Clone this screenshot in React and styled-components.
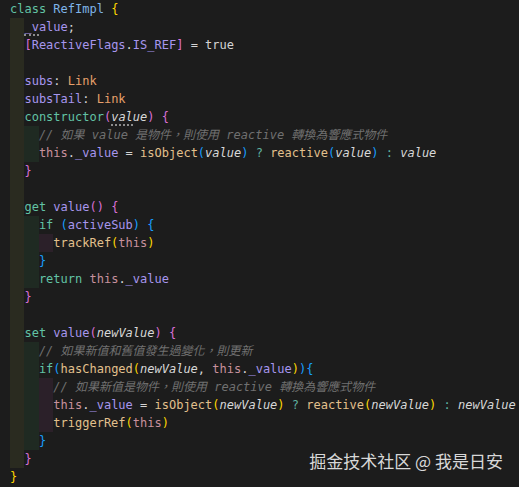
import styled, { createGlobalStyle } from "styled-components";

const GlobalStyle = createGlobalStyle`
  html, body {
    margin: 0;
    padding: 0;
    background: #1c1c1c;
  }
`;

const colors = {
  kw: "#62c3a5",
  cls: "#7fb4e8",
  prop: "#a796ee",
  type: "#e6a06b",
  fn: "#e2c08d",
  this: "#c8919d",
  param: "#d8d8d8",
  p: "#d4d4d4",
  op: "#5fb3a1",
  cm: "#707070",
  b1: "#ffd700",
  b2: "#da70d6",
  b3: "#179fff",
};

const bandColors = ["#2a2b20", "#1f2a22", "#2b2029"];

const Editor = styled.div`
  position: relative;
  width: 519px;
  height: 487px;
  overflow: hidden;
  background: #1c1c1c;
  padding-left: 10px;
  box-sizing: border-box;
  font-family: "DejaVu Sans Mono", "Noto Sans CJK TC", monospace;
  font-size: 12px;
`;

const Line = styled.div`
  display: flex;
  height: 18px;
  line-height: 18px;
  white-space: pre;
`;

const Band = styled.span`
  display: inline-block;
  flex: none;
  width: 2ch;
  height: 18px;
  background: ${(p) => bandColors[p.$level]};
`;

const Token = styled.span`
  color: ${(p) => colors[p.$kind]};
  font-style: ${(p) => (p.$kind === "param" || p.$kind === "cm" ? "italic" : "normal")};
  ${(p) =>
    p.$hint &&
    `
    border-bottom: 2px dotted #8c8c8c;
  `}
`;

const Watermark = styled.div`
  position: absolute;
  right: 16px;
  bottom: 14px;
  color: #d8d8d8;
  font-family: "Noto Sans CJK SC", "Noto Sans", sans-serif;
  font-size: 17px;
  line-height: 24px;
  white-space: nowrap;
`;

// [bands, tokens]
const lines = [
  [0, [["kw", "class"], ["p", " "], ["cls", "RefImpl"], ["p", " "], ["b1", "{"]]],
  [1, [["prop", "_v", true], ["prop", "alue"], ["p", ";"]]],
  [1, [["b2", "["], ["prop", "ReactiveFlags"], ["p", "."], ["prop", "IS_REF"], ["b2", "]"], ["p", " = true"]]],
  [1, []],
  [1, [["prop", "subs"], ["p", ": "], ["type", "Link"]]],
  [1, [["prop", "subsTail"], ["p", ": "], ["type", "Link"]]],
  [1, [["kw", "constructor"], ["b2", "("], ["param", "val", true], ["param", "ue"], ["b2", ")"], ["p", " "], ["b2", "{"]]],
  [2, [["cm", "// 如果 value 是物件，則使用 reactive 轉換為響應式物件"]]],
  [2, [["this", "this"], ["p", "."], ["prop", "_value"], ["p", " = "], ["fn", "isObject"], ["b3", "("], ["param", "value"], ["b3", ")"], ["op", " ? "], ["fn", "reactive"], ["b3", "("], ["param", "value"], ["b3", ")"], ["op", " : "], ["param", "value"]]],
  [1, [["b2", "}"]]],
  [1, []],
  [1, [["kw", "get"], ["p", " "], ["prop", "value"], ["b2", "()"], ["p", " "], ["b2", "{"]]],
  [2, [["kw", "if"], ["p", " "], ["b3", "("], ["prop", "activeSub"], ["b3", ")"], ["p", " "], ["b3", "{"]]],
  [3, [["fn", "trackRef"], ["b1", "("], ["this", "this"], ["b1", ")"]]],
  [2, [["b3", "}"]]],
  [2, [["kw", "return"], ["p", " "], ["this", "this"], ["p", "."], ["prop", "_value"]]],
  [1, [["b2", "}"]]],
  [1, []],
  [1, [["kw", "set"], ["p", " "], ["prop", "value"], ["b2", "("], ["param", "newValue"], ["b2", ")"], ["p", " "], ["b2", "{"]]],
  [2, [["cm", "// 如果新值和舊值發生過變化，則更新"]]],
  [2, [["kw", "if"], ["b3", "("], ["fn", "hasChanged"], ["b1", "("], ["param", "newValue"], ["p", ", "], ["this", "this"], ["p", "."], ["prop", "_value"], ["b1", ")"], ["b3", "){"]]],
  [3, [["cm", "// 如果新值是物件，則使用 reactive 轉換為響應式物件"]]],
  [3, [["this", "this"], ["p", "."], ["prop", "_value"], ["p", " = "], ["fn", "isObject"], ["b1", "("], ["param", "newValue"], ["b1", ")"], ["op", " ? "], ["fn", "reactive"], ["b1", "("], ["param", "newValue"], ["b1", ")"], ["op", " : "], ["param", "newValue"]]],
  [3, [["fn", "triggerRef"], ["b1", "("], ["this", "this"], ["b1", ")"]]],
  [2, [["b3", "}"]]],
  [1, [["b2", "}"]]],
  [0, [["b1", "}"]]],
];

const App = () => {
  return (
    <>
      <GlobalStyle />
      <Editor>
        {lines.map(([bands, tokens], i) => (
          <Line key={i}>
            {Array.from({ length: bands }, (_, l) => (
              <Band key={"b" + l} $level={l} />
            ))}
            {tokens.map(([kind, text, hint], j) => (
              <Token key={j} $kind={kind} $hint={hint}>
                {text}
              </Token>
            ))}
          </Line>
        ))}
        <Watermark>掘金技术社区 @ 我是日安</Watermark>
      </Editor>
    </>
  );
};

export default App;
